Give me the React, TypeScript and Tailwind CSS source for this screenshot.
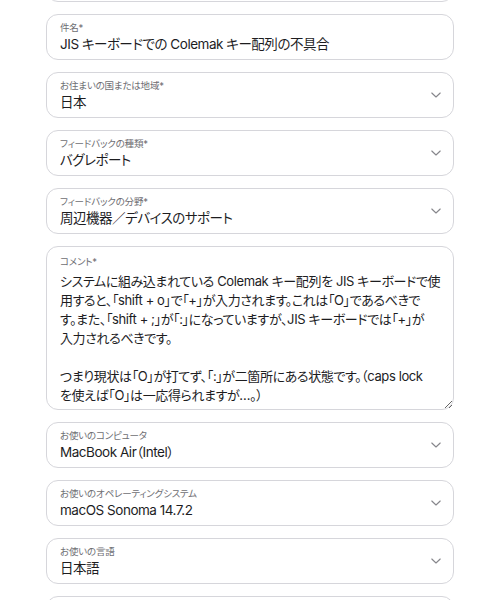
import React from "react";

const FONT = {
  fontFamily: '"Inter", "Noto Sans CJK JP", sans-serif',
  fontFeatureSettings: '"palt"',
};

type Field = { label: string; value: string; select?: boolean };

const TOP_FIELDS: Field[] = [
  { label: "件名*", value: "JIS キーボードでの Colemak キー配列の不具合" },
  { label: "お住まいの国または地域*", value: "日本", select: true },
  { label: "フィードバックの種類*", value: "バグレポート", select: true },
  { label: "フィードバックの分野*", value: "周辺機器／デバイスのサポート", select: true },
];

const BOTTOM_FIELDS: Field[] = [
  { label: "お使いのコンピュータ", value: "MacBook Air（Intel）", select: true },
  { label: "お使いのオペレーティングシステム", value: "macOS Sonoma 14.7.2", select: true },
  { label: "お使いの言語", value: "日本語", select: true },
];

// wrapped the same way the form shows it
const COMMENT = [
  "システムに組み込まれている Colemak キー配列を JIS キーボードで使",
  "用すると、「shift + o」で「+」が入力されます。これは「O」であるべきで",
  "す。また、「shift + ;」が「:」になっていますが、JIS キーボードでは「+」が",
  "入力されるべきです。",
  "",
  "つまり現状は「O」が打てず、「:」が二箇所にある状態です。（caps lock",
  "を使えば「O」は一応得られますが…。）",
].join("\n");

function Chevron() {
  return (
    <svg width="12" height="8" viewBox="0 0 12 8" fill="none" className="shrink-0">
      <path d="M1.8 2 6 6l4.2-4" stroke="#86868b" strokeWidth="1.1" strokeLinecap="round" strokeLinejoin="round" />
    </svg>
  );
}

function FieldBox({ label, value, select }: Field) {
  return (
    <div className="flex h-[46px] items-center justify-between rounded-[12px] border border-[#d6d6db] bg-white pl-[13px] pr-[11px]">
      <div className="flex min-w-0 flex-col pt-[1px]">
        <span className="text-[9.5px] leading-[12px] tracking-[-0.02em] text-[#6e6e73]">{label}</span>
        <span className="mt-[1px] text-[13.5px] leading-[18px] tracking-[-0.035em] text-[#1d1d1f]">{value}</span>
      </div>
      {select && <Chevron />}
    </div>
  );
}

export default function App() {
  return (
    <div className="min-h-[600px] bg-white" style={FONT}>
      <div className="mx-auto flex w-[408px] flex-col gap-[12px] overflow-hidden pb-6">
        <div className="-mt-[44px] h-[46px] rounded-[12px] border border-[#d6d6db] bg-white" />
        {TOP_FIELDS.map((f) => (
          <FieldBox key={f.label} {...f} />
        ))}
        <div className="relative">
          <span className="absolute left-[14px] top-[10px] text-[9.5px] leading-[12px] tracking-[-0.02em] text-[#6e6e73]">
            コメント*
          </span>
          <textarea
            readOnly
            value={COMMENT}
            className="block h-[164px] w-full resize-y rounded-[12px] border border-[#d6d6db] bg-white pl-[13px] pr-[8px] pt-[25px] text-[13px] leading-[19px] tracking-[-0.03em] text-[#1d1d1f] outline-none"
            style={FONT}
          />
        </div>
        {BOTTOM_FIELDS.map((f) => (
          <FieldBox key={f.label} {...f} />
        ))}
        <div className="h-[46px] rounded-[12px] border border-[#d6d6db] bg-white" />
      </div>
    </div>
  );
}
